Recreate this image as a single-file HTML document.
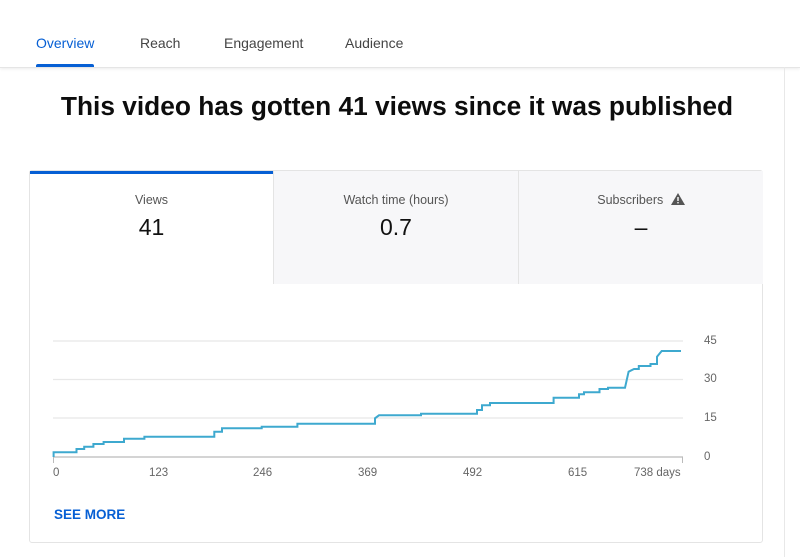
<!DOCTYPE html>
<html><head><style>
body{margin:0;width:800px;height:557px;background:#fff;font-family:"Liberation Sans",Arial,sans-serif;position:relative;overflow:hidden}
.nav{position:absolute;left:0;top:0;width:800px;height:67px;border-bottom:1px solid #e5e5e5;box-shadow:0 1px 3px rgba(0,0,0,.08)}
.tab{position:absolute;top:35px;font-size:14px;color:#444}
.h{position:absolute;left:0;width:794px;top:91px;text-align:center;font-size:26.3px;font-weight:bold;color:#0d0d0d;letter-spacing:0}
.card{position:absolute;left:29px;top:170px;width:734px;height:373px;border:1px solid #e4e4e4;border-radius:3px;box-sizing:border-box}
.m{position:absolute;top:0;height:113px;background:#f7f7f9;text-align:center}
.lab{font-size:12.5px;color:#555;margin-top:22px}
.val{font-size:23px;color:#111;margin-top:7px}
.ax{position:absolute;font-size:11.5px;color:#666}
</style></head><body>
<div class="nav">
<span class="tab" style="left:36px;color:#065fd4">Overview</span>
<div style="position:absolute;left:36px;top:64px;width:58px;height:3px;background:#065fd4;border-radius:2px 2px 0 0"></div>
<span class="tab" style="left:140px">Reach</span>
<span class="tab" style="left:224px">Engagement</span>
<span class="tab" style="left:345px">Audience</span>
</div>
<div style="position:absolute;left:784px;top:67px;width:1px;height:490px;background:#e8e8e8"></div>
<div class="h">This video has gotten 41 views since it was published</div>
<div class="card">
<div class="m" style="left:0;width:243px;background:#fff;border-top:3px solid #065fd4;box-sizing:border-box"><div class="lab" style="margin-top:19px">Views</div><div class="val">41</div></div>
<div class="m" style="left:243px;width:246px;border-left:1px solid #e4e4e4;border-right:1px solid #e4e4e4;box-sizing:border-box"><div class="lab">Watch time (hours)</div><div class="val">0.7</div></div>
<div class="m" style="left:489px;width:244px"><div class="lab">Subscribers <svg width="14" height="12" viewBox="0 0 14 12" style="vertical-align:-1px;margin-left:4px"><path d="M7 0L14 12H0Z" fill="#555"/><rect x="6.3" y="4" width="1.4" height="4" fill="#fff"/><rect x="6.3" y="9" width="1.4" height="1.4" fill="#fff"/></svg></div><div class="val">–</div></div>
</div>
<svg style="position:absolute;left:0;top:0" width="800" height="557">
<g stroke="#e8e8e8" stroke-width="1.3"><line x1="53" y1="341" x2="683" y2="341"/><line x1="53" y1="379.5" x2="683" y2="379.5"/><line x1="53" y1="418" x2="683" y2="418"/></g>
<line x1="53" y1="457" x2="683" y2="457" stroke="#bbb" stroke-width="1.3"/>
<line x1="53.5" y1="457" x2="53.5" y2="463" stroke="#bbb"/><line x1="682.5" y1="457" x2="682.5" y2="463" stroke="#bbb"/>
<path fill="none" stroke="#3ea9cf" stroke-width="2" d="M53.6 457V452.3H76.5V449H84.2V446.7H93.4V444H103.6V442H124V438.7H144.4V436.7H214.3V431.7H222V428.3H261.7V426.7H297.4V423.7H375V418.3L379 415.3H421V413.7H477V410H482V405.3H490V403H553.6V397.7H579V394.3H584V392.3H599.5V389H608V387.7H625L628.6 371.7L634 369H638.8V366H650.5V364H657V356.7L661.7 351H681"/>
</svg>
<div class="ax" style="left:704px;top:335px">45</div>
<div class="ax" style="left:704px;top:373px">30</div>
<div class="ax" style="left:704px;top:412px">15</div>
<div class="ax" style="left:704px;top:451px">0</div>
<div class="ax" style="left:53px;top:467px">0</div>
<div class="ax" style="left:149px;top:467px">123</div>
<div class="ax" style="left:253px;top:467px">246</div>
<div class="ax" style="left:358px;top:467px">369</div>
<div class="ax" style="left:463px;top:467px">492</div>
<div class="ax" style="left:568px;top:467px">615</div>
<div class="ax" style="left:634px;top:467px">738 days</div>
<div style="position:absolute;left:54px;top:507px;font-size:13.5px;font-weight:bold;color:#065fd4">SEE MORE</div>
</body></html>
